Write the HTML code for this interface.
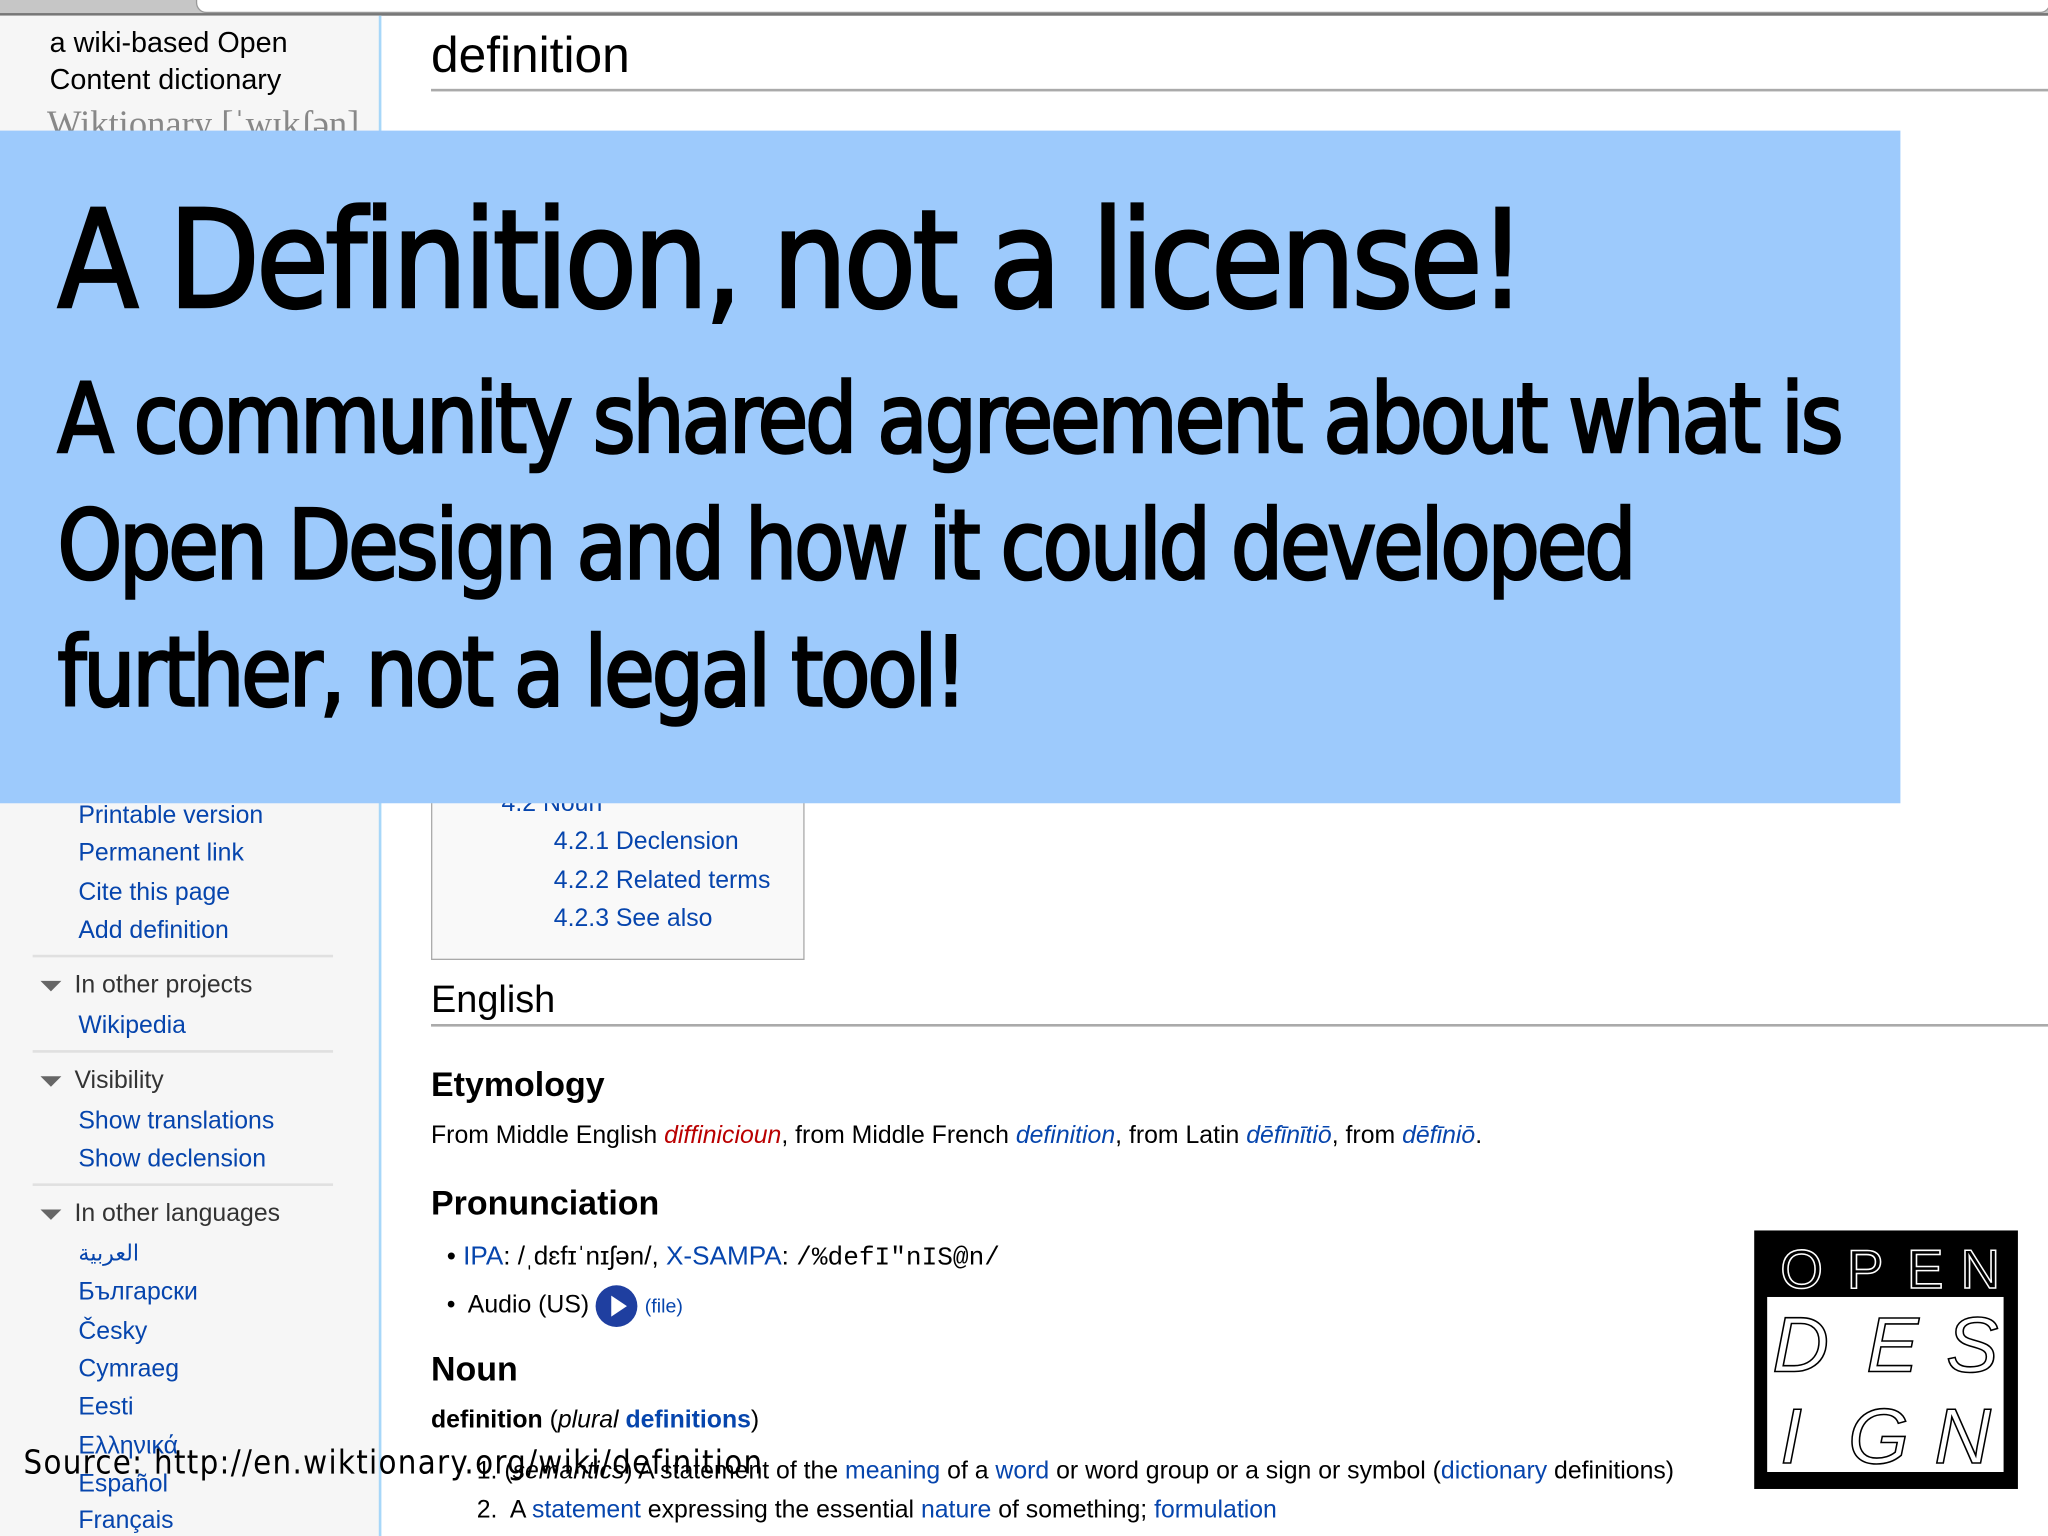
<!DOCTYPE html>
<html><head><meta charset="utf-8"><style>
html,body{margin:0;padding:0;width:2048px;height:1535px;overflow:hidden;background:#fff}
#w{position:absolute;left:0;top:0;width:1568px;height:1176px;transform:scale(1.30612);transform-origin:0 0;font-family:"Liberation Sans",Arial,sans-serif;color:#000}
.a{position:absolute;white-space:nowrap}
.l{color:#0645ad}
.sb{font-size:19px;color:#0645ad;left:60px}
.hd{font-size:19px;color:#333;left:57px}
.tri{position:absolute;left:31px;width:0;height:0;border-left:8px solid transparent;border-right:8px solid transparent;border-top:8px solid #666}
.sep{position:absolute;left:25px;width:230px;height:2px;background:#e0e0e0}
.big{font-family:"DejaVu Sans Condensed","Liberation Sans Narrow","Liberation Sans",sans-serif;transform-origin:0 0;-webkit-text-stroke:2px #000}
</style></head><body><div id="w">
<div class="a" style="left:0;top:0;width:1568px;height:10px;background:#c6c6c6;border-bottom:2px solid #777"></div>
<div class="a" style="left:150px;top:-10px;width:1418px;height:18px;background:#fff;border-radius:8px;border:1px solid #999"></div>
<div class="a" style="left:0;top:12px;width:290px;height:1164px;background:#f6f6f6;border-right:2px solid #a7d7f9"></div>
<div class="a" style="left:38px;top:19px;font-size:22px;line-height:28px">a wiki-based Open<br>Content dictionary</div>
<div class="a" style="left:36px;top:80px;font-size:28px;color:#888;font-family:'Liberation Serif',serif">Wiktionary [ˈwɪkʃən]</div>
<div class="a" style="left:330px;top:22px;font-size:38px">definition</div>
<div class="a" style="left:330px;top:68px;width:1238px;height:2px;background:#aaa"></div>

<div class="a" style="left:330px;top:598px;width:284px;height:135px;background:#f9f9f9;border:1px solid #aaa"></div>
<div class="a l" style="left:384px;top:605px;font-size:19px">4.2 Noun</div>
<div class="a l" style="left:424px;top:634px;font-size:19px">4.2.1 Declension</div>
<div class="a l" style="left:424px;top:664px;font-size:19px">4.2.2 Related terms</div>
<div class="a l" style="left:424px;top:693px;font-size:19px">4.2.3 See also</div>

<div class="a sb" style="top:614px">Printable version</div>
<div class="a sb" style="top:643px">Permanent link</div>
<div class="a sb" style="top:673px">Cite this page</div>
<div class="a sb" style="top:702px">Add definition</div>
<div class="sep" style="top:731px"></div>
<div class="tri" style="top:751px"></div><div class="a hd" style="top:744px">In other projects</div>
<div class="a sb" style="top:775px">Wikipedia</div>
<div class="sep" style="top:804px"></div>
<div class="tri" style="top:824px"></div><div class="a hd" style="top:817px">Visibility</div>
<div class="a sb" style="top:848px">Show translations</div>
<div class="a sb" style="top:877px">Show declension</div>
<div class="sep" style="top:906px"></div>
<div class="tri" style="top:926px"></div><div class="a hd" style="top:919px">In other languages</div>
<div class="a sb" style="top:950px;font-family:'DejaVu Sans',sans-serif;font-size:17px">العربية</div>
<div class="a sb" style="top:979px">Български</div>
<div class="a sb" style="top:1009px">Česky</div>
<div class="a sb" style="top:1038px">Cymraeg</div>
<div class="a sb" style="top:1067px">Eesti</div>
<div class="a sb" style="top:1097px">Ελληνικά</div>
<div class="a sb" style="top:1126px">Español</div>
<div class="a sb" style="top:1154px">Français</div>

<div class="a" style="left:330px;top:750px;font-size:29px">English</div>
<div class="a" style="left:330px;top:784px;width:1238px;height:2px;background:#aaa"></div>
<div class="a" style="left:330px;top:815px;font-size:26px;font-weight:bold">Etymology</div>
<div class="a" style="left:330px;top:859px;font-size:19px">From Middle English <i style="color:#ba0000">diffinicioun</i>, from Middle French <i class="l">definition</i>, from Latin <i class="l">dēfīnītiō</i>, from <i class="l">dēfīniō</i>.</div>
<div class="a" style="left:330px;top:906px;font-size:26px;font-weight:bold">Pronunciation</div>
<div class="a" style="left:342px;top:951px;font-size:20px">• <span class="l">IPA</span>: /ˌdɛfɪˈnɪʃən/, <span class="l">X-SAMPA</span>: <span style="font-family:'Liberation Mono',monospace">/%defI"nIS@n/</span></div>
<div class="a" style="left:342px;top:984px;font-size:19px">•&nbsp; Audio (US) <span style="display:inline-block;width:32px;height:32px;border-radius:50%;background:#1f3fa0;vertical-align:middle;position:relative"><span style="position:absolute;left:12px;top:8px;border-left:12px solid #fff;border-top:8px solid transparent;border-bottom:8px solid transparent"></span></span> <span class="l" style="font-size:15px">(file)</span></div>
<div class="a" style="left:330px;top:1033px;font-size:26px;font-weight:bold">Noun</div>
<div class="a" style="left:330px;top:1077px;font-size:19px"><b>definition</b> (<i>plural</i> <b class="l">definitions</b>)</div>
<div class="a" style="left:365px;top:1116px;font-size:19px">1. (<i>semantics</i>) A statement of the <span class="l">meaning</span> of a <span class="l">word</span> or word group or a sign or symbol (<span class="l">dictionary</span> definitions)</div>
<div class="a" style="left:365px;top:1146px;font-size:19px">2.&nbsp; A <span class="l">statement</span> expressing the essential <span class="l">nature</span> of something; <span class="l">formulation</span></div>

<div class="a" style="left:18px;top:1105px;font-size:25px;font-family:'DejaVu Sans Condensed','DejaVu Sans',sans-serif;letter-spacing:1px">Source: http://en.wiktionary.org/wiki/definition</div>

<div class="a" style="left:0;top:100px;width:1455px;height:515px;background:#9dcafc"></div>
<div class="a big" style="left:44px;top:138px;font-size:104px;letter-spacing:-3px;transform:scaleX(0.97)">A Definition, not a license!</div>
<div class="a big" style="left:44px;top:273px;font-size:74px;line-height:97px;letter-spacing:-2.5px;transform:scaleX(0.946)">A community shared agreement about what is<br>Open Design and how it could developed<br>further, not a legal tool!</div>

<svg class="a" style="left:1343px;top:942px" width="202" height="198" viewBox="0 0 202 198">
<rect width="202" height="198" fill="#000"/>
<rect x="10" y="51" width="181" height="134" fill="#fff"/>
<g fill="none" stroke="#fff" stroke-width="1.2" font-family="Liberation Sans,sans-serif" font-size="42">
<text x="20" y="44">O</text><text x="71" y="44">P</text><text x="117" y="44">E</text><text x="158" y="44">N</text>
</g>
<g fill="none" stroke="#000" stroke-width="1.2" font-family="Liberation Sans,sans-serif" font-size="60" font-style="italic">
<text x="14" y="108">D</text><text x="86" y="108">E</text><text x="147" y="108">S</text>
<text x="20" y="178">I</text><text x="72" y="178">G</text><text x="138" y="178">N</text>
</g>
</svg>
</div></body></html>
